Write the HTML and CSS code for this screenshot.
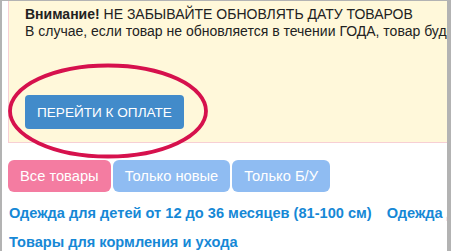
FILE: index.html
```html
<!DOCTYPE html>
<html lang="ru">
<head>
<meta charset="UTF-8">
<title>Товары</title>
<link rel="stylesheet" href="styles.css">
</head>
<body>
  <div class="frame">
    <div class="page">
      <div class="alert">
        <p><b>Внимание!</b> НЕ ЗАБЫВАЙТЕ ОБНОВЛЯТЬ ДАТУ ТОВАРОВ</p>
        <p>В случае, если товар не обновляется в течении ГОДА, товар будет скрыт из каталога</p>
        <a class="pay-btn" href="#">Перейти к оплате</a>
      </div>

      <div class="tabs">
        <a class="tab tab-active" href="#">Все товары</a>
        <a class="tab" href="#">Только новые</a>
        <a class="tab" href="#">Только Б/У</a>
      </div>

      <div class="cats">
        <a href="#">Одежда для детей от 12 до 36 месяцев (81-100 см)</a>
        <a href="#">Одежда для детей от 3 до 7 лет (101-128 см)</a>
        <a href="#">Товары для кормления и ухода</a>
      </div>
    </div>

    <!-- marker circled around the pay button -->
    <svg class="mark" width="202" height="96" viewBox="0 0 202 96">
      <ellipse cx="101" cy="48" rx="98" ry="45.5" fill="none" stroke="#d6114d" stroke-width="3.8"/>
    </svg>
  </div>
</body>
</html>
```

FILE: styles.css
```css
html, body {
  margin: 0;
  padding: 0;
  height: 100%;
  background: #b3b3b3;
}

.frame {
  position: relative;
  box-sizing: border-box;
  height: 100%;
  margin: 1px 4px 0 2px;
  background: #fff;
  overflow: hidden;
  font-family: "Liberation Sans", Arial, sans-serif;
}

.page {
  width: 740px;
  padding-left: 6px;
}

.alert {
  background: #fff8da;
  border: 1px solid #f7cfd4;
  border-top: none;
  padding: 5px 16px 13px;
  color: #222;
  font-size: 14px;
  line-height: 17px;
}

.alert p {
  margin: 0;
  white-space: nowrap;
}

.pay-btn {
  display: inline-block;
  margin-top: 55px;
  padding: 9px 12px 8px;
  background: #428bca;
  color: #fff;
  border-radius: 4px;
  text-decoration: none;
  text-transform: uppercase;
  font-size: 13.6px;
  line-height: 17px;
}

.tabs {
  display: flex;
  gap: 2px;
  margin-top: 17px;
}

.tab {
  display: block;
  padding: 0 12px;
  height: 32px;
  line-height: 32px;
  background: #8fbcf2;
  color: #fff;
  font-size: 14.7px;
  border-radius: 6px;
  text-decoration: none;
}

.tab-active {
  background: #f47ca1;
}

.cats {
  display: flex;
  flex-wrap: wrap;
  column-gap: 15px;
  padding: 7px 0 0 1px;
}

.cats a {
  color: #1688d6;
  font-size: 14.6px;
  font-weight: bold;
  line-height: 29px;
  text-decoration: none;
  white-space: nowrap;
}

.mark {
  position: absolute;
  left: 5px;
  top: 62px;
}
```
